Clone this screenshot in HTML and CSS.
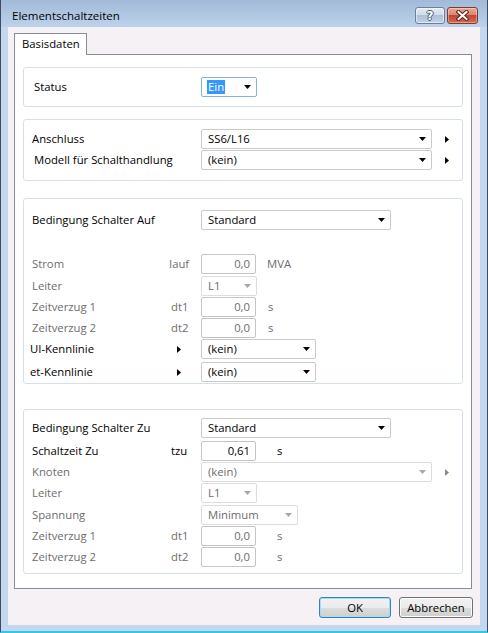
FILE: index.html
```html
<!DOCTYPE html>
<html lang="de">
<head>
<meta charset="utf-8">
<title>Elementschaltzeiten</title>
<link rel="stylesheet" href="styles.css">
</head>
<body>
<div class="window">
  <div class="titlebar">
    <span class="title">Elementschaltzeiten</span>
    <div class="tbtns">
      <div class="tbtn help"><span class="q">?</span></div>
      <div class="tbtn close">
        <svg width="13" height="11" viewBox="0 0 13 11"><path d="M2.5 2L10.5 9M10.5 2L2.5 9" stroke="#5a2018" stroke-width="4" stroke-linecap="square"/><path d="M2.5 2L10.5 9M10.5 2L2.5 9" stroke="#fff" stroke-width="2" stroke-linecap="square"/></svg>
      </div>
    </div>
  </div>
  <div class="client">
    <div class="tabs"><div class="tab">Basisdaten</div><div class="tabfill"></div></div>
    <div class="panel">
      <div class="group g1">
        <div class="row h20">
          <span class="lbl in2">Status</span><span class="sym"></span>
          <div class="combo focus w56"><span class="sel">Ein</span><svg class="dd" width="7" height="4" viewBox="0 0 7 4"><path d="M0 0H7L3.5 4Z"/></svg></div>
        </div>
      </div>

      <div class="group g2">
        <div class="row h21">
          <span class="lbl">Anschluss</span><span class="sym"></span>
          <div class="combo w230"><span>SS6/L16</span><svg class="dd" width="7" height="4" viewBox="0 0 7 4"><path d="M0 0H7L3.5 4Z"/></svg></div>
          <svg class="ra far" width="4" height="7" viewBox="0 0 4 7"><path d="M0 0L4 3.5L0 7Z"/></svg>
        </div>
        <div class="row h21">
          <span class="lbl in2">Modell für Schalthandlung</span><span class="sym"></span>
          <div class="combo w230"><span>(kein)</span><svg class="dd" width="7" height="4" viewBox="0 0 7 4"><path d="M0 0H7L3.5 4Z"/></svg></div>
          <svg class="ra far" width="4" height="7" viewBox="0 0 4 7"><path d="M0 0L4 3.5L0 7Z"/></svg>
        </div>
      </div>

      <div class="group g3">
        <div class="row h20">
          <span class="lbl">Bedingung Schalter Auf</span><span class="sym"></span>
          <div class="combo w190"><span>Standard</span><svg class="dd" width="7" height="4" viewBox="0 0 7 4"><path d="M0 0H7L3.5 4Z"/></svg></div>
        </div>
        <div class="spacer"></div>
        <div class="row h22 dis">
          <span class="lbl">Strom</span><span class="sym">Iauf</span>
          <div class="tb">0,0</div><span class="unit">MVA</span>
        </div>
        <div class="row h21 dis">
          <span class="lbl">Leiter</span><span class="sym"></span>
          <div class="combo off w56"><span>L1</span><svg class="dd" width="7" height="4" viewBox="0 0 7 4"><path d="M0 0H7L3.5 4Z"/></svg></div>
        </div>
        <div class="row h21 dis">
          <span class="lbl">Zeitverzug 1</span><span class="sym s2">dt1</span>
          <div class="tb">0,0</div><span class="unit u1">s</span>
        </div>
        <div class="row h21 dis">
          <span class="lbl">Zeitverzug 2</span><span class="sym s2">dt2</span>
          <div class="tb">0,0</div><span class="unit u1">s</span>
        </div>
        <div class="row h23">
          <span class="lbl out2">UI-Kennlinie</span>
          <span class="sym"><svg class="ra near" width="4" height="7" viewBox="0 0 4 7"><path d="M0 0L4 3.5L0 7Z"/></svg></span>
          <div class="combo w115"><span>(kein)</span><svg class="dd" width="7" height="4" viewBox="0 0 7 4"><path d="M0 0H7L3.5 4Z"/></svg></div>
        </div>
        <div class="row h20">
          <span class="lbl out2">et-Kennlinie</span>
          <span class="sym"><svg class="ra near" width="4" height="7" viewBox="0 0 4 7"><path d="M0 0L4 3.5L0 7Z"/></svg></span>
          <div class="combo w115"><span>(kein)</span><svg class="dd" width="7" height="4" viewBox="0 0 7 4"><path d="M0 0H7L3.5 4Z"/></svg></div>
        </div>
      </div>

      <div class="group g4">
        <div class="row h23">
          <span class="lbl">Bedingung Schalter Zu</span><span class="sym"></span>
          <div class="combo w190"><span>Standard</span><svg class="dd" width="7" height="4" viewBox="0 0 7 4"><path d="M0 0H7L3.5 4Z"/></svg></div>
        </div>
        <div class="row h21">
          <span class="lbl">Schaltzeit Zu</span><span class="sym s2">tzu</span>
          <div class="tb">0,61</div><span class="unit u2">s</span>
        </div>
        <div class="row h21 dis">
          <span class="lbl">Knoten</span><span class="sym"></span>
          <div class="combo off w230"><span>(kein)</span><svg class="dd" width="7" height="4" viewBox="0 0 7 4"><path d="M0 0H7L3.5 4Z"/></svg></div>
          <svg class="ra far" width="4" height="7" viewBox="0 0 4 7"><path d="M0 0L4 3.5L0 7Z"/></svg>
        </div>
        <div class="row h22 dis">
          <span class="lbl">Leiter</span><span class="sym"></span>
          <div class="combo off w56"><span>L1</span><svg class="dd" width="7" height="4" viewBox="0 0 7 4"><path d="M0 0H7L3.5 4Z"/></svg></div>
        </div>
        <div class="row h21 dis">
          <span class="lbl">Spannung</span><span class="sym"></span>
          <div class="combo off w97"><span>Minimum</span><svg class="dd" width="7" height="4" viewBox="0 0 7 4"><path d="M0 0H7L3.5 4Z"/></svg></div>
        </div>
        <div class="row h21 dis">
          <span class="lbl">Zeitverzug 1</span><span class="sym s2">dt1</span>
          <div class="tb">0,0</div><span class="unit u2">s</span>
        </div>
        <div class="row h21 dis">
          <span class="lbl">Zeitverzug 2</span><span class="sym s2">dt2</span>
          <div class="tb">0,0</div><span class="unit u2">s</span>
        </div>
      </div>
    </div>
    <div class="buttons">
      <button class="btn default ok">OK</button>
      <button class="btn cancel">Abbrechen</button>
    </div>
  </div>
</div>
</body>
</html>
```

FILE: styles.css
```css
* { box-sizing: border-box; }
html, body { margin: 0; padding: 0; }
body {
  width: 488px;
  height: 633px;
  overflow: hidden;
  background: #c3d7ef;
  font-family: "Open Sans", "Noto Sans", sans-serif;
  font-size: 11.3px;
  color: #000;
}
.window {
  width: 488px;
  height: 633px;
  display: flex;
  flex-direction: column;
  background: #c3d7ef;
  border-left: 1px solid #3b4c63;
  border-right: 1px solid #3b4c63;
  border-bottom: 2px solid #2fc9ee;
}
.titlebar {
  height: 27px;
  flex: none;
  display: flex;
  justify-content: space-between;
  align-items: flex-start;
  padding: 0 9px 0 11px;
  background: linear-gradient(#a2bad8, #bcd2ec);
}
.title {
  margin-top: 7px;
  font-size: 11.5px;
  line-height: 18px;
}
.tbtns { display: flex; gap: 2px; margin-top: 7px; }
.tbtn {
  height: 17px;
  border-radius: 3px;
  display: flex;
  align-items: center;
  justify-content: center;
}
.help {
  width: 30px;
  border: 1px solid #6c7f97;
  background: linear-gradient(#e3ebf4 0%, #cfdcea 45%, #adc1d9 50%, #c1d2e6 100%);
  box-shadow: inset 0 0 0 1px rgba(255,255,255,0.5);
}
.q {
  font-family: "DejaVu Sans", sans-serif;
  font-weight: bold;
  font-size: 12px;
  line-height: 14px;
  color: #fff;
  text-shadow: 1px 0 #4b5a6c, -1px 0 #4b5a6c, 0 1px #4b5a6c, 0 -1px #4b5a6c;
}
.close {
  width: 31px;
  border: 1px solid #7a3b33;
  background: linear-gradient(#eaa898 0%, #dc8571 45%, #c24631 50%, #d26a52 100%);
  box-shadow: inset 0 0 0 1px rgba(255,255,255,0.35);
}
.client {
  flex: 1;
  margin: 0 7px 6px 7px;
  background: #f5f1f5;
  padding: 6px 8px 0 6px;
  display: flex;
  flex-direction: column;
}
.tabs { display: flex; height: 22px; flex: none; }
.tab {
  width: 73px;
  border: 1px solid #898c95;
  border-bottom: none;
  background: #fff;
  padding-left: 7px;
  line-height: 20px;
}
.tabfill { flex: 1; border-bottom: 1px solid #898c95; }
.panel {
  height: 534px;
  flex: none;
  border: 1px solid #898c95;
  border-top: none;
  background: #fff;
  padding: 12px 8px 0 8px;
}
.group {
  border: 1px solid #d6e0e7;
  border-radius: 3px;
  padding-left: 8px;
}
.g1 { padding-top: 9px; padding-bottom: 9px; }
.g2 { margin-top: 12px; padding-top: 9px; padding-bottom: 9px; }
.g3 { margin-top: 17px; padding-top: 11px; padding-bottom: 1px; }
.g4 { margin-top: 25px; padding-top: 8px; padding-bottom: 5px; }
.spacer { height: 24px; }
.row { display: flex; align-items: flex-start; }
.h20 { height: 20px; }
.h21 { height: 21px; }
.h22 { height: 22px; }
.h23 { height: 23px; }
.lbl {
  width: 137px;
  flex: none;
  line-height: 20px;
  white-space: nowrap;
}
.lbl.in2 { padding-left: 2px; }
.lbl.out2 { margin-left: -2px; width: 139px; }
.sym {
  width: 32px;
  flex: none;
  line-height: 20px;
  display: flex;
  align-items: center;
  height: 20px;
}
.sym.s2 { padding-left: 2px; }
.dis { color: #6d6d6d; }
.combo {
  height: 20px;
  flex: none;
  border: 1px solid #cacaca;
  border-radius: 2px;
  background: #fff;
  display: flex;
  align-items: center;
  justify-content: space-between;
  padding: 0 5px 0 6px;
  line-height: 18px;
  color: #000;
}
.combo.focus { border-color: #84b3e2; padding-left: 5px; }
.combo.off { border-color: #dcdcdc; color: #6d6d6d; }
.combo.off .dd { fill: #a8a8a8; }
.dd { fill: #000; flex: none; }
.sel { background: #3399ff; color: #fff; padding: 0 1px; line-height: 14px; }
.w56 { width: 56px; }
.w97 { width: 97px; }
.w115 { width: 115px; }
.w190 { width: 190px; }
.w230 { width: 231px; }
.tb {
  width: 55px;
  height: 20px;
  flex: none;
  border: 1px solid #c4c4c4;
  border-radius: 2px;
  background: #fff;
  text-align: right;
  padding-right: 5px;
  line-height: 18px;
}
.row:not(.dis) .tb { color: #000; }
.unit { line-height: 20px; margin-left: 11px; }
.unit.u1 { margin-left: 12px; }
.unit.u2 { margin-left: 21px; }
.ra { fill: #000; flex: none; }
.ra.far { margin-left: 13px; margin-top: 7px; }
.ra.near { margin-left: 8px; }
.dis .ra { fill: #8a8a8a; }
.buttons {
  display: flex;
  justify-content: flex-end;
  gap: 8px;
  margin-top: 8px;
  margin-right: -1px;
}
.btn {
  height: 21px;
  font: inherit;
  color: #000;
  border: 1px solid #707070;
  border-radius: 3px;
  background: linear-gradient(#f2f2f2 0%, #ebebeb 50%, #dddddd 51%, #cfcfcf 100%);
  box-shadow: inset 0 0 0 1px #fbfbfb;
  padding: 0;
  line-height: 17px;
}
.btn.default {
  border-color: #3c7fb1;
  box-shadow: inset 0 0 0 1px #9fe0f8;
}
.ok { width: 72px; }
.cancel { width: 74px; }
```
